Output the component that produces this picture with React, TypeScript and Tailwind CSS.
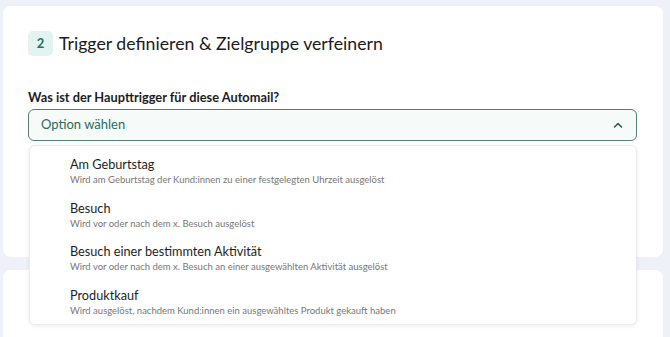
import React from 'react';

const options = [
  { title: 'Am Geburtstag', desc: 'Wird am Geburtstag der Kund:innen zu einer festgelegten Uhrzeit ausgelöst' },
  { title: 'Besuch', desc: 'Wird vor oder nach dem x. Besuch ausgelöst' },
  { title: 'Besuch einer bestimmten Aktivität', desc: 'Wird vor oder nach dem x. Besuch an einer ausgewählten Aktivität ausgelöst' },
  { title: 'Produktkauf', desc: 'Wird ausgelöst, nachdem Kund:innen ein ausgewähltes Produkt gekauft haben' },
];

const ChevronUp = () => (
  <svg width="12" height="12" viewBox="0 0 12 12" fill="none" className="text-[#2f5f54]">
    <path d="M2.5 8L6 4.5L9.5 8" stroke="currentColor" strokeWidth="1.6" strokeLinecap="round" strokeLinejoin="round" />
  </svg>
);

export default function App() {
  return (
    <div
      className="w-[670px] h-[337px] overflow-hidden bg-[#eef1f8] pl-[3px] pr-[7px] pt-[6px] flex flex-col gap-[13px]"
      style={{ fontFamily: 'Lato, "Noto Sans", sans-serif' }}
    >
      <div className="relative bg-white rounded-lg h-[251px] shrink-0 px-[25px] pt-[25px]">
        <div className="flex items-center gap-[6px] h-[25px]">
          <div className="w-[25px] h-[25px] rounded-[5px] bg-[#e3f4f0] flex items-center justify-center text-[13px] font-bold text-[#26705f]">
            2
          </div>
          <h2 className="text-[17.7px] leading-[22px] text-[#1b1b1b]">Trigger definieren &amp; Zielgruppe verfeinern</h2>
        </div>
        <div className="mt-[33px] text-[12.8px] font-bold text-[#1d1d1d] leading-[16px]">
          Was ist der Haupttrigger für diese Automail?
        </div>
        <div className="mt-[4px] h-[32px] w-[609px] rounded-[6px] border border-[#567f75] bg-[#f6faf9] flex items-center justify-between pl-[12px] pr-[12px]">
          <span className="text-[13px] text-[#2c6a5b]">Option wählen</span>
          <ChevronUp />
        </div>
        <div className="absolute left-[26px] top-[139px] w-[608px] h-[180px] bg-white rounded-[6px] border border-[#ececec] shadow-[0_1px_4px_rgba(0,0,0,0.08)] z-10 pt-[10px] flex flex-col">
          {options.map((o) => (
            <div key={o.title} className="pl-[40px] h-[43.5px] shrink-0">
              <div className="text-[12.7px] text-[#1e1e1e] leading-[17px]">{o.title}</div>
              <div className="text-[9.5px] text-[#777] leading-[13px]">{o.desc}</div>
            </div>
          ))}
        </div>
      </div>
      <div className="bg-white rounded-lg h-[80px] shrink-0" />
    </div>
  );
}
